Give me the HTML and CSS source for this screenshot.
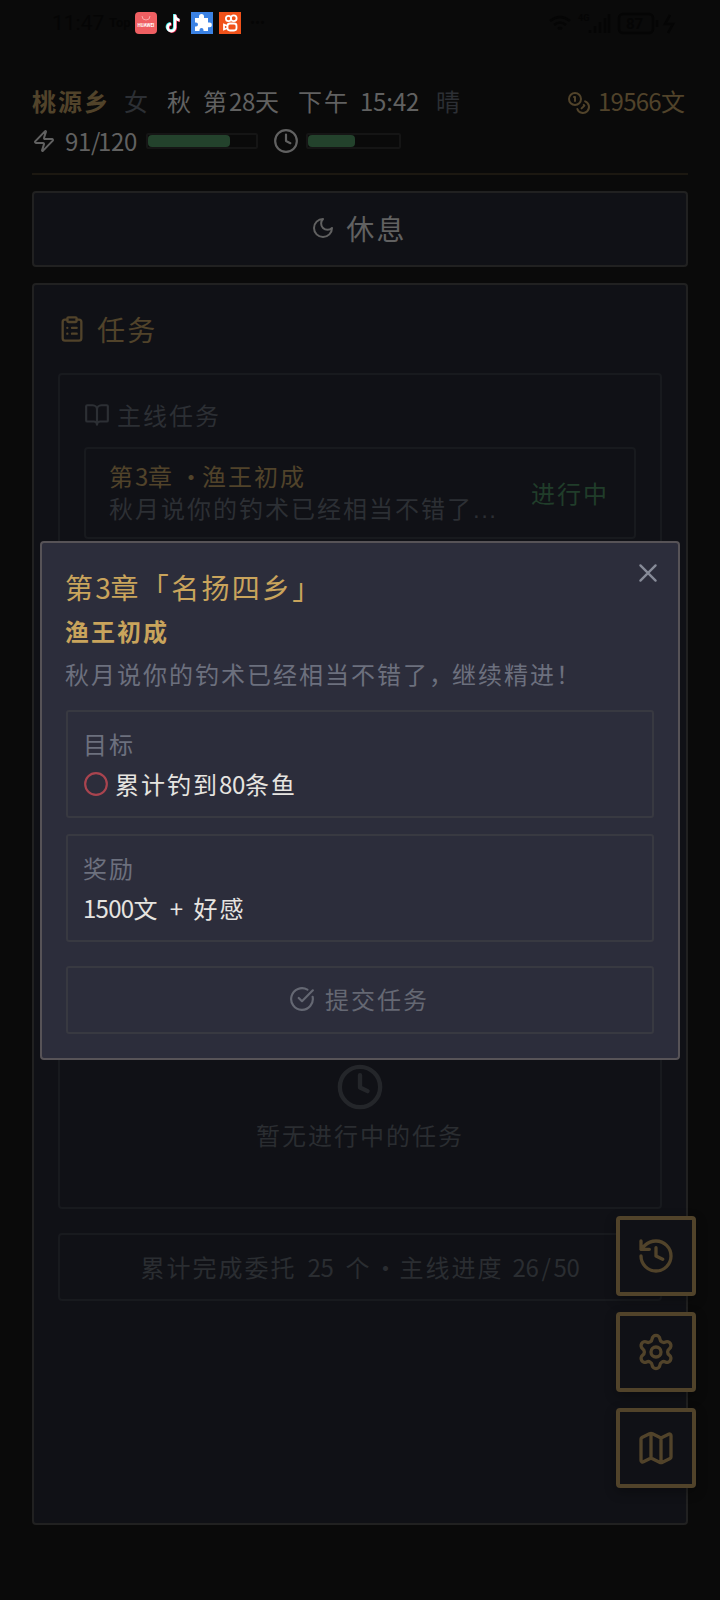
FILE: index.html
```html
<!DOCTYPE html>
<html lang="zh-CN">
<head>
<meta charset="utf-8">
<title>桃源乡</title>
<link rel="stylesheet" href="styles.css">
</head>
<body>
<div class="app">
  <div class="statusbar">
    <span class="sys-time">11:47</span><span class="sys-top">Top</span>
    <div class="apps">
      <svg width="22" height="22" viewBox="0 0 22 22"><rect width="22" height="22" rx="4" fill="#ef5f62"/><path d="M7 4a4 4 0 0 0 8 0" fill="none" stroke="#f8aaa9" stroke-width="1"/><text class="tiny" x="11" y="14.500" text-anchor="middle">HUAWEI</text></svg>
      <svg width="22" height="22" viewBox="0 0 22 22" fill="none" stroke-width="2.600"><path d="M11.300 2v13a3.700 3.700 0 1 1-4-3.800M11.300 3c.6 3 2 4.400 4.700 4.600" stroke="#2ce5e5"/><path d="M12.700 3v13a3.700 3.700 0 1 1-4-3.800M12.700 4c.6 3 2 4.400 4.300 4.600" stroke="#f0305a"/><path d="M12 2.500v13a3.700 3.700 0 1 1-4-3.800M12 3.500c.6 3 2 4.400 4.500 4.600" stroke="#fff"/></svg>
      <svg width="22" height="22" viewBox="0 0 22 22"><path fill="#3b82e4" d="M0 0h22v22H0z"/><path fill="#fff" d="M4 6h4V4.500a2.500 2.500 0 0 1 5 0V6h4v4.500h1.500a2.400 2.400 0 0 1 0 4.800H17V19h-4.500v-1a2 2 0 0 0-4 0v1H4v-4.500h1a2 2 0 0 0 0-4H4z"/></svg>
      <svg width="22" height="22" viewBox="0 0 22 22" fill="none" stroke="#fff" stroke-width="1.800"><path d="M0 0h22v22H0z" fill="#f0521a" stroke="none"/><circle cx="9.500" cy="6.500" r="2.600"/><circle cx="14.700" cy="6.200" r="2.900"/><rect x="8.500" y="11.500" width="9" height="7" rx="2.400"/><path d="M8.500 14l-3.500-1.500v5l3.500-1.500"/></svg>
    </div>
    <span class="sys-dots">•••</span>
    <svg class="sys-right" width="128" height="24" viewBox="0 0 128 24" fill="none" stroke="#050505" stroke-width="2.500"><path d="M2 9q10-8 20 0M6 13q6-5 12 0M10 17q2-2 4 0"/><text class="sys-net" x="30" y="9">4G</text><path d="M42 21v-3M47 21v-7M52 21V10M57 21V6M61 21V2"/><rect x="71" y="2" width="34" height="19" rx="4"/><path d="M109 8v7"/><text class="sys-bat" x="78" y="17">87</text><path d="M122 3l-5 9h8l-5 9"/></svg>
  </div>

  <header class="header">
    <div class="row info t">
      <b class="gold place">桃源乡</b><span class="muted sex">女</span><span class="season">秋</span><span class="day">第<span class="n">28</span>天</span><span class="noon">下午</span><span class="n clock">15<i>:</i>42</span><span class="muted weather">晴</span>
      <span class="money gold">
        <svg class="ico" width="24" height="24" viewBox="0 0 24 24"><circle cx="8" cy="8" r="6"/><path d="M18.090 10.370A6 6 0 1 1 10.340 18M7 6h1v4M16.710 13.880l.7.710-2.820 2.820"/></svg>
        <span><span class="n tight">19566</span>文</span>
      </span>
    </div>
    <div class="row stats t">
      <svg class="ico" width="24" height="24" viewBox="0 0 24 24"><path d="M4 14a1 1 0 0 1-.780-1.630l9.900-10.200a.5.5 0 0 1 .860.460l-1.920 6.020A1 1 0 0 0 13 10h7a1 1 0 0 1 .780 1.630l-9.900 10.200a.5.5 0 0 1-.860-.460l1.920-6.020A1 1 0 0 0 11 14z"/></svg>
      <span class="n hp">91<i>/</i>120</span>
      <div class="bar bar-hp"><div style="width:76%"></div></div>
      <svg class="ico" width="26" height="26" viewBox="0 0 24 24"><circle cx="12" cy="12" r="10"/><path d="M12 6v6l4 2"/></svg>
      <div class="bar bar-time"><div style="width:52%"></div></div>
    </div>
  </header>

  <button class="rest big">
    <svg class="ico" width="24" height="24" viewBox="0 0 24 24"><path d="M12 3a6 6 0 0 0 9 9 9 9 0 1 1-9-9Z"/></svg><span>休息</span>
  </button>

  <main class="panel">
    <h2 class="big gold">
      <svg class="ico" width="28" height="28" viewBox="0 0 24 24"><rect x="8" y="2" width="8" height="4" rx="1"/><path d="M16 4h2a2 2 0 0 1 2 2v14a2 2 0 0 1-2 2H6a2 2 0 0 1-2-2V6a2 2 0 0 1 2-2h2M12 11h4M12 16h4M8 11h.010M8 16h.010"/></svg><span>任务</span>
    </h2>
    <section class="box main-quest t">
      <h3 class="muted"><svg class="ico" width="26" height="26" viewBox="0 0 24 24"><path d="M12 7v14M3 18a1 1 0 0 1-1-1V4a1 1 0 0 1 1-1h5a4 4 0 0 1 4 4 4 4 0 0 1 4-4h5a1 1 0 0 1 1 1v13a1 1 0 0 1-1 1h-6a3 3 0 0 0-3 3 3 3 0 0 0-3-3z"/></svg><span>主线任务</span></h3>
      <div class="quest">
        <div class="quest-text">
          <div class="gold">第<span class="n">3</span>章<span class="dot">·</span>渔王初成</div>
          <div class="muted">秋月说你的钓术已经相当不错了<span class="ell">...</span></div>
        </div>
        <span class="green">进行中</span>
      </div>
    </section>
    <section class="box empty t">
      <svg class="ico" width="52" height="52" viewBox="0 0 24 24"><circle cx="12" cy="12" r="9.300"/><path d="M12 6.500v5.700l3.500 1.700"/></svg>
      <p>暂无进行中的任务</p>
    </section>
    <section class="box summary t">累计完成委托<span class="n sp">25</span>个<span class="dot">·</span>主线进度<span class="n sl">26<i>/</i>50</span></section>
  </main>

  <nav class="fabs">
    <button><svg class="ico" width="40" height="40" viewBox="0 0 24 24"><path d="M3 12a9 9 0 1 0 9-9 9.750 9.750 0 0 0-6.740 2.740L3 8M3 3v5h5M12 7v5l4 2"/></svg></button>
    <button><svg class="ico" width="40" height="40" viewBox="0 0 24 24"><path d="M9.671 4.136a2.340 2.340 0 0 1 4.659 0 2.340 2.340 0 0 0 3.319 1.915 2.340 2.340 0 0 1 2.330 4.033 2.340 2.340 0 0 0 0 3.831 2.340 2.340 0 0 1-2.330 4.033 2.340 2.340 0 0 0-3.319 1.915 2.340 2.340 0 0 1-4.659 0 2.340 2.340 0 0 0-3.320-1.915 2.340 2.340 0 0 1-2.330-4.033 2.340 2.340 0 0 0 0-3.831A2.340 2.340 0 0 1 6.350 6.051a2.340 2.340 0 0 0 3.319-1.915"/><circle cx="12" cy="12" r="3"/></svg></button>
    <button><svg class="ico" width="40" height="40" viewBox="0 0 24 24"><path d="M14.106 5.553a2 2 0 0 0 1.788 0l3.659-1.830A1 1 0 0 1 21 4.619v12.764a1 1 0 0 1-.553.894l-4.553 2.277a2 2 0 0 1-1.788 0l-4.212-2.106a2 2 0 0 0-1.788 0l-3.659 1.830A1 1 0 0 1 3 19.381V6.618a1 1 0 0 1 .553-.894l4.553-2.277a2 2 0 0 1 1.788 0zM15 5.764v15M9 3.236v15"/></svg></button>
  </nav>

  <div class="modal t">
    <svg class="close ico" width="28" height="28" viewBox="0 0 24 24"><path d="M18.500 5.500l-13 13M5.500 5.500l13 13"/></svg>
    <h2 class="big">第<span class="n">3</span>章「名扬四乡」</h2>
    <h3>渔王初成</h3>
    <p class="desc">秋月说你的钓术已经相当不错了<span class="comma">，</span>继续精进！</p>
    <div class="card">
      <div class="label">目标</div>
      <div class="goal"><svg class="ico red" width="26" height="26" viewBox="0 0 24 24"><circle cx="12" cy="12" r="10"/></svg><span>累计钓到<span class="n">80</span>条鱼</span></div>
    </div>
    <div class="card">
      <div class="label">奖励</div>
      <div class="goal"><span><span class="n tight">1500</span>文<span class="plus">+</span>好感</span></div>
    </div>
    <button class="submit"><svg class="ico" width="26" height="26" viewBox="0 0 24 24"><path d="M21.801 10A10 10 0 1 1 17 3.335M9 11l3 3L22 4"/></svg><span>提交任务</span></button>
  </div>
</div>
</body>
</html>
```
FILE: styles.css
```css
* { box-sizing: border-box; }
body {
  margin: 0;
  background: #0a0a0a;
  color: #616161;
  font-family: "Noto Sans CJK SC", sans-serif;
}
h2, h3, p { margin: 0; font-weight: 400; }
button { font: inherit; color: inherit; letter-spacing: inherit; margin: 0; padding: 0; }
.app { position: relative; width: 720px; height: 1600px; padding: 0 32px; overflow: hidden; }

/* Type: CJK cells of 26px / 30px, digits half as wide */
.t { font-size: 24px; letter-spacing: 2px; line-height: 32px; white-space: nowrap; }
.big { font-size: 28px; letter-spacing: 2.300px; line-height: 40px; white-space: nowrap; }
.n { letter-spacing: -0.320px; }
.tight { letter-spacing: -0.700px; }
.n i { display: inline-block; width: 7px; text-align: center; font-style: normal; }
.dot { display: inline-block; width: 28px; text-align: center; letter-spacing: 0; }
.quest .dot { padding-left: 5px; }
.gold { color: #51432a; }
.muted { color: #2c2f34; }
.green { color: #203d2a; }
.ico { flex: none; display: block; fill: none; stroke: currentColor; stroke-width: 2; stroke-linecap: round; stroke-linejoin: round; }

/* Device status bar */
.statusbar { height: 84px; margin: 0 -32px; padding: 12px 44px 0 52px; display: flex; align-items: flex-start; color: #050505; font-family: Roboto, sans-serif; line-height: 22px; }
.sys-time { width: 57px; font-size: 21px; }
.sys-top { width: 26px; font-size: 13px; font-weight: 700; }
.apps { display: flex; gap: 6px; }
.tiny { font: 700 4.500px Roboto, sans-serif; fill: #fff; }
.sys-dots { margin-left: 9px; font-size: 15px; }
.sys-right { margin-left: auto; }
.sys-net { font: 700 9px Roboto, sans-serif; fill: #050505; stroke: none; }
.sys-bat { font: 700 15px Roboto, sans-serif; fill: #050505; stroke: none; }

/* Header */
.header { height: 91px; border-bottom: 2px solid #1c1811; }
.row { display: flex; align-items: center; }
.info { height: 34px; }
.place { width: 92px; }
.sex { width: 43px; }
.season { width: 36px; }
.day { width: 95px; }
.noon { width: 62px; }
.clock { width: 76px; }
.money { display: flex; align-items: center; gap: 7px; margin-left: auto; margin-right: 1px; }
.money .ico { margin-top: 4px; }
.stats { height: 32px; margin-top: 7px; }
.hp { width: 81px; margin-left: 9px; }
.bar { height: 16px; padding: 0; border: 2px solid #151515; border-radius: 2px; }
.bar div { height: 12px; border-radius: 4px; background: #23422c; }
.bar-hp { width: 112px; margin-right: 15px; }
.bar-time { width: 95px; margin-left: 7px; }

/* Rest button */
.rest { width: 100%; height: 76px; margin: 16px 0; padding: 0 2px 2px 0; display: flex; align-items: center; justify-content: center; gap: 11px; background: #101116; border: 2px solid #212121; border-radius: 4px; }

/* Quest panel */
.panel { height: 1242px; padding: 23px 24px 24px; background: #101116; border: 2px solid #212121; border-radius: 4px; }
.panel h2 { display: flex; align-items: center; gap: 11px; height: 42px; }
.box { border: 2px solid #181a1e; border-radius: 4px; }
.main-quest { height: 193px; margin-top: 23px; padding: 24px; }
.main-quest h3 { display: flex; align-items: center; gap: 7px; height: 32px; font-size: 24px; }
.quest { display: flex; align-items: center; justify-content: space-between; height: 92px; margin-top: 16px; padding: 0 24px 0 23px; border: 2px solid #181a1e; border-radius: 4px; }
.quest > .green { margin-right: 1px; }
.ell { font-family: "Liberation Sans", sans-serif; letter-spacing: 1.500px; }
.empty { height: 619px; margin-top: 24px; padding-bottom: 56px; display: flex; flex-direction: column; align-items: center; justify-content: flex-end; gap: 6px; color: #2a2d31; }
.empty .ico { color: #24262a; }
.summary { height: 68px; margin-top: 24px; padding-top: 16px; text-align: center; color: #2a2d31; }
.sp { margin: 0 12px 0 11px; }
.sl { margin-left: 9px; }
.sl i { width: 15px; }

/* Floating shortcuts */
.fabs { position: absolute; right: 24px; top: 1216px; display: flex; flex-direction: column; gap: 16px; }
.fabs button { width: 80px; height: 80px; display: flex; align-items: center; justify-content: center; color: #51432a; background: #101116; border: 4px solid #51432a; border-radius: 4px; box-shadow: 0 4px 12px rgba(0, 0, 0, .3); }

/* Quest dialog */
.modal { position: absolute; left: 40px; top: 541px; width: 640px; height: 519px; padding: 24px; background: #2c2d3b; border: 2px solid #575357; border-radius: 4px; color: #e6e4e0; }
.close { position: absolute; right: 16px; top: 16px; color: #878b98; }
.modal h2, .modal h3, .desc { margin-left: -1px; }
.modal h2 { height: 40px; color: #c9a45c; }
.modal h3 { height: 32px; margin-top: 8px; font-size: 24px; font-weight: 700; color: #c9a45c; }
.desc { height: 32px; margin-top: 11px; color: #6c707e; }
.comma { letter-spacing: -1px; }
.card { height: 108px; margin-top: 20px; padding: 16px 15px; border: 2px solid #383941; border-radius: 3px; }
.card + .card { margin-top: 16px; }
.label { height: 32px; color: #6c707e; }
.goal { display: flex; align-items: center; gap: 6px; height: 32px; margin-top: 8px; }
.red { color: #a9444f; }
.plus { display: inline-block; width: 34px; text-align: center; letter-spacing: 0; }
.submit { width: 100%; height: 68px; margin-top: 24px; padding: 0 2px 2px 0; display: flex; align-items: center; justify-content: center; gap: 10px; color: #656873; background: none; border: 2px solid #383941; border-radius: 3px; }
```
